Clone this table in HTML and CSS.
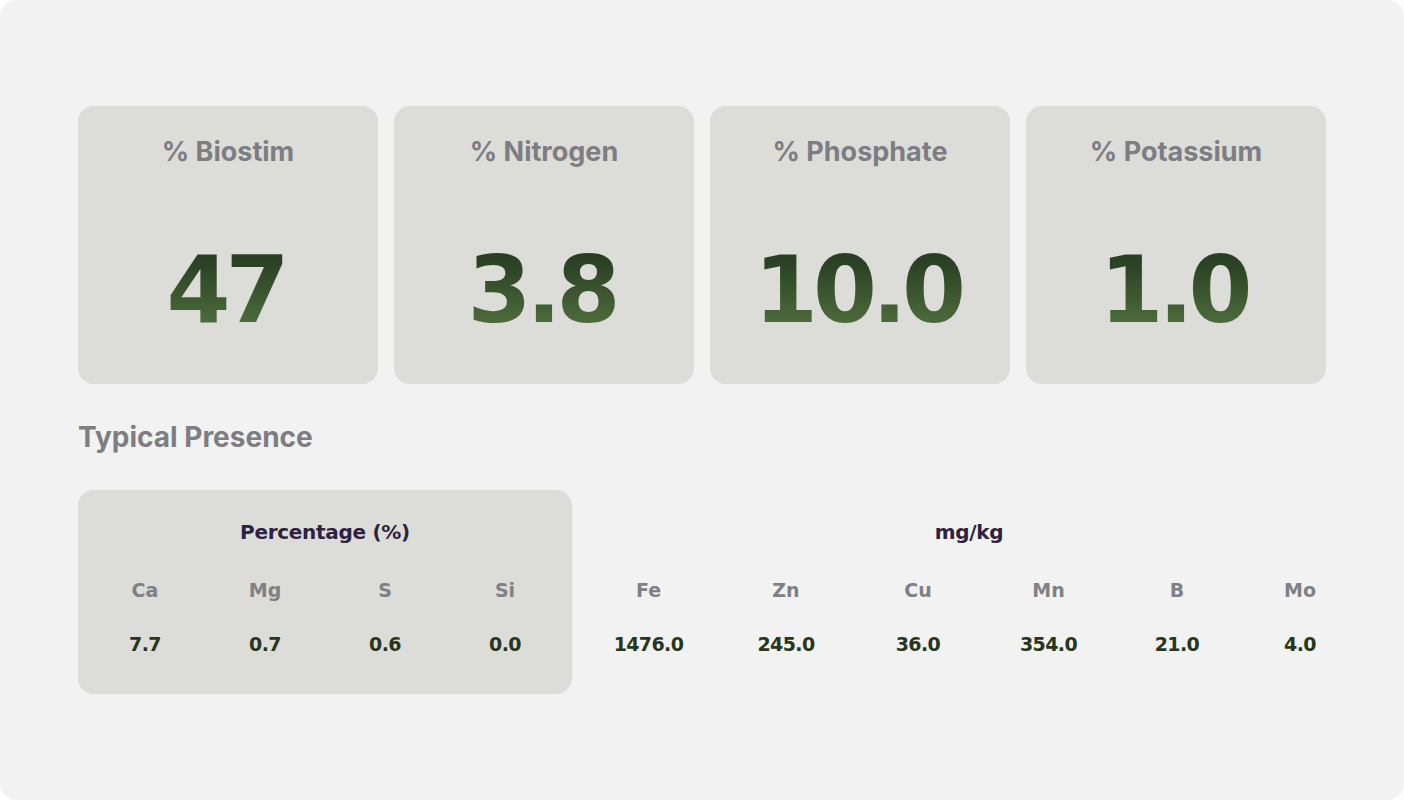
FILE: index.html
```html
<!DOCTYPE html>
<html lang="en">
<head>
<meta charset="utf-8">
<title>Nutrients</title>
<link rel="stylesheet" href="styles.css">
</head>
<body>
<div class="panel">
  <div class="cards">
    <div class="card"><div class="card-title">% Biostim</div><div class="card-value">47</div></div>
    <div class="card"><div class="card-title">% Nitrogen</div><div class="card-value">3.8</div></div>
    <div class="card"><div class="card-title">% Phosphate</div><div class="card-value">10.0</div></div>
    <div class="card"><div class="card-title">% Potassium</div><div class="card-value">1.0</div></div>
  </div>
  <h2 class="section-title">Typical Presence</h2>
  <div class="presence">
    <div class="group group-pct">
      <div class="group-head">Percentage (%)</div>
      <div class="cols cols-pct">
        <div class="lbl">Ca</div><div class="lbl">Mg</div><div class="lbl">S</div><div class="lbl">Si</div>
        <div class="val">7.7</div><div class="val">0.7</div><div class="val">0.6</div><div class="val">0.0</div>
      </div>
    </div>
    <div class="group group-mg">
      <div class="group-head">mg/kg</div>
      <div class="cols cols-mg">
        <div class="lbl">Fe</div><div class="lbl">Zn</div><div class="lbl">Cu</div><div class="lbl">Mn</div><div class="lbl">B</div><div class="lbl">Mo</div>
        <div class="val">1476.0</div><div class="val">245.0</div><div class="val">36.0</div><div class="val">354.0</div><div class="val">21.0</div><div class="val">4.0</div>
      </div>
    </div>
  </div>
</div>
</body>
</html>
```

FILE: styles.css
```css
html, body {
  margin: 0;
  padding: 0;
  background: #ffffff;
}

.panel {
  width: 1404px;
  height: 800px;
  box-sizing: border-box;
  background: #f2f2f2;
  border-radius: 16px;
  padding: 106px 78px 0 78px;
  font-family: "DejaVu Sans", sans-serif;
}

.cards {
  display: grid;
  grid-template-columns: repeat(4, 300px);
  gap: 16px;
}

.card {
  height: 278px;
  box-sizing: border-box;
  background: #dcdcd8;
  border-radius: 16px;
  padding-top: 30px;
  text-align: center;
}

.card-title {
  font-family: "Inter", sans-serif;
  font-weight: 700;
  font-size: 27px;
  line-height: 32px;
  color: #7d7d82;
}

.card-value {
  margin-top: 76px;
  padding: 0 8px 0 3px;
  font-family: "DejaVu Sans", sans-serif;
  font-weight: 700;
  font-size: 92px;
  line-height: 93px;
  letter-spacing: -5px;
  background: linear-gradient(180deg, #26391f 0%, #2d4426 25%, #4a6839 80%, #4d6c3c 100%);
  -webkit-background-clip: text;
  background-clip: text;
  color: transparent;
  display: inline-block;
}

.section-title {
  margin: 37px 0 37px 0;
  font-family: "Inter", sans-serif;
  font-weight: 700;
  font-size: 28px;
  line-height: 32px;
  color: #7d7d82;
}

.presence {
  display: flex;
  gap: 6px;
}

.group {
  box-sizing: border-box;
  height: 204px;
  padding-top: 30px;
  text-align: center;
}

.group-pct {
  width: 494px;
  background: #dcdcd8;
  border-radius: 16px;
  padding-left: 7px;
  padding-right: 7px;
}

.group-head {
  font-weight: 700;
  font-size: 20px;
  line-height: 24px;
  color: #2d2340;
  letter-spacing: -0.3px;
}

.cols {
  display: grid;
  row-gap: 30px;
  margin-top: 34px;
}

.cols-pct {
  grid-template-columns: repeat(4, 120px);
}

.cols-mg {
  grid-template-columns: 141px 134px 130px 131px 126px 120px;
}

.lbl {
  font-weight: 700;
  font-size: 19px;
  line-height: 24px;
  color: #808086;
}

.val {
  font-weight: 700;
  font-size: 19px;
  line-height: 24px;
  color: #27361c;
  letter-spacing: -0.6px;
}
```
